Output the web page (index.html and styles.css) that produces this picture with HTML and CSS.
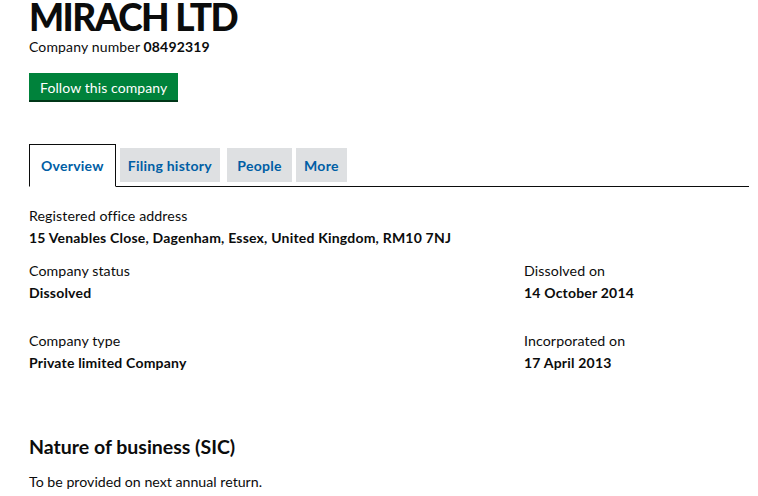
FILE: index.html
```html
<!DOCTYPE html>
<html lang="en">
<head>
<meta charset="utf-8">
<title>MIRACH LTD</title>
<link rel="stylesheet" href="styles.css">
</head>
<body>
<main class="page">
  <header class="company-header">
    <h1 class="company-name">MIRACH LTD</h1>
    <p class="company-number">Company number <strong>08492319</strong></p>
    <a class="button-follow" href="#">Follow this company</a>
  </header>

  <nav class="tabs">
    <a class="tab tab-active" href="#">Overview</a>
    <a class="tab" href="#">Filing history</a>
    <a class="tab tab-people" href="#">People</a>
    <a class="tab" href="#">More</a>
  </nav>

  <section class="overview">
    <dl class="field">
      <dt>Registered office address</dt>
      <dd>15 Venables Close, Dagenham, Essex, United Kingdom, RM10 7NJ</dd>
    </dl>

    <div class="grid">
      <dl class="field">
        <dt>Company status</dt>
        <dd>Dissolved</dd>
      </dl>
      <dl class="field">
        <dt>Dissolved on</dt>
        <dd>14 October 2014</dd>
      </dl>
      <dl class="field">
        <dt>Company type</dt>
        <dd>Private limited Company</dd>
      </dl>
      <dl class="field">
        <dt>Incorporated on</dt>
        <dd>17 April 2013</dd>
      </dl>
    </div>

    <h2 class="section-heading">Nature of business (SIC)</h2>
    <p class="body-text">To be provided on next annual return.</p>
  </section>
</main>
</body>
</html>
```

FILE: styles.css
```css
html, body {
  margin: 0;
  padding: 0;
  background: #ffffff;
}

body {
  font-family: Lato, "Noto Sans", "Liberation Sans", sans-serif;
  color: #0b0c0c;
}

.page {
  padding: 0 9px 0 29px;
}

.company-name {
  margin: 0;
  font-size: 37px;
  font-weight: 900;
  line-height: 34px;
  letter-spacing: -1.6px;
}

.company-number {
  margin: 4px 0 0;
  font-size: 14px;
  line-height: 18px;
  letter-spacing: 0.15px;
}

.company-number strong {
  font-weight: 700;
}

.button-follow {
  display: inline-block;
  margin-top: 17px;
  padding: 0 11px;
  height: 27px;
  line-height: 29px;
  background: #00823b;
  box-shadow: 0 2px 0 #003618;
  color: #ffffff;
  font-size: 14px;
  letter-spacing: 0.1px;
  text-decoration: none;
}

.tabs {
  display: flex;
  align-items: flex-end;
  gap: 4px;
  margin-top: 44px;
  border-bottom: 1px solid #0b0c0c;
  height: 42px;
}

.tab {
  display: flex;
  align-items: center;
  height: 34px;
  margin-bottom: 4px;
  padding: 0 8px;
  background: #dee0e2;
  color: #005ea5;
  font-size: 14px;
  font-weight: 700;
  letter-spacing: 0.25px;
  text-decoration: none;
}

.tab-people {
  margin-left: 3px;
  padding: 0 10.5px;
}

.tab-active {
  height: 41px;
  margin-bottom: -1px;
  padding: 0 11px;
  background: #ffffff;
  border: 1px solid #0b0c0c;
  border-bottom-color: #ffffff;
}

.overview {
  padding-top: 20px;
}

.field {
  margin: 0;
}

.field dt {
  font-size: 14.2px;
  line-height: 17px;
  letter-spacing: 0.1px;
}

.field dd {
  margin: 5px 0 0;
  font-size: 14px;
  font-weight: 700;
  line-height: 17px;
  letter-spacing: 0.2px;
}

.grid {
  display: grid;
  grid-template-columns: 495px 1fr;
  row-gap: 31px;
  margin-top: 16px;
}

.section-heading {
  margin: 65px 0 0;
  font-size: 19.5px;
  font-weight: 700;
  line-height: 22px;
}

.body-text {
  margin: 15px 0 0;
  font-size: 14.2px;
  line-height: 17px;
}
```
